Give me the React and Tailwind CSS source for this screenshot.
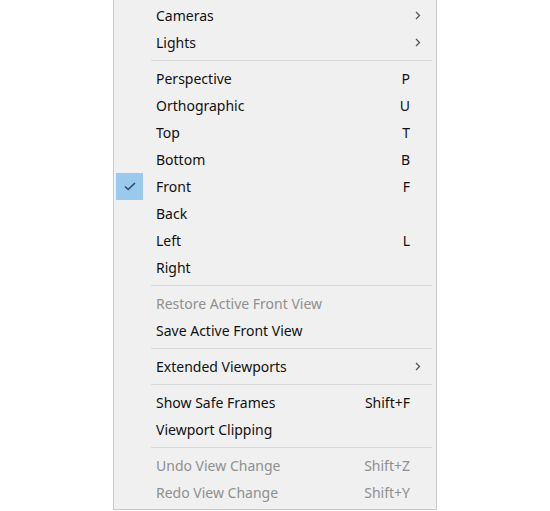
import React from 'react';

const items = [
  { label: 'Cameras', sub: true },
  { label: 'Lights', sub: true },
  { sep: true },
  { label: 'Perspective', key: 'P' },
  { label: 'Orthographic', key: 'U' },
  { label: 'Top', key: 'T' },
  { label: 'Bottom', key: 'B' },
  { label: 'Front', key: 'F', checked: true },
  { label: 'Back' },
  { label: 'Left', key: 'L' },
  { label: 'Right' },
  { sep: true },
  { label: 'Restore Active Front View', disabled: true },
  { label: 'Save Active Front View' },
  { sep: true },
  { label: 'Extended Viewports', sub: true },
  { sep: true },
  { label: 'Show Safe Frames', key: 'Shift+F' },
  { label: 'Viewport Clipping' },
  { sep: true },
  { label: 'Undo View Change', key: 'Shift+Z', disabled: true },
  { label: 'Redo View Change', key: 'Shift+Y', disabled: true },
];

const Check = () => (
  <svg width="12" height="9" viewBox="0 0 12 9" fill="none">
    <path d="M1 4.5 L4.2 7.5 L11 1" stroke="#2f4a66" strokeWidth="1.6" />
  </svg>
);

const Chevron = () => (
  <svg width="6" height="9" viewBox="0 0 6 9" fill="none">
    <path d="M1 1 L4.5 4.5 L1 8" stroke="#555" strokeWidth="1.3" />
  </svg>
);

export default function App() {
  return (
    <div className="w-[550px] h-[511px] bg-white overflow-hidden" style={{ fontFamily: '"Noto Sans", sans-serif' }}>
      <div className="ml-[113px] w-[324px] h-[510px] bg-[#f0f0f0] border-l border-r border-b border-[#cccccc] pt-[2px]">
        {items.map((it, i) =>
          it.sep ? (
            <div key={i} className="h-[9px] flex items-center pl-[37px] pr-[4px]">
              <div className="w-full h-px bg-[#d7d7d7]" />
            </div>
          ) : (
            <div
              key={i}
              className={`h-[27px] flex items-center text-[14px] ${it.disabled ? 'text-[#8f8f8f]' : 'text-[#111111]'}`}
            >
              <div className="w-[42px] pl-[2px] h-[27px] flex items-center shrink-0">
                {it.checked && (
                  <div className="w-[27px] h-[27px] bg-[#99c9ef] flex items-center justify-center">
                    <Check />
                  </div>
                )}
              </div>
              <span className="flex-1 whitespace-nowrap">{it.label}</span>
              <span className="shrink-0 pr-[26px] whitespace-nowrap">{it.key}</span>
              <div className="w-[0px] relative">
                {it.sub && (
                  <div className="absolute right-[15px] top-[-5px]">
                    <Chevron />
                  </div>
                )}
              </div>
            </div>
          )
        )}
      </div>
    </div>
  );
}
